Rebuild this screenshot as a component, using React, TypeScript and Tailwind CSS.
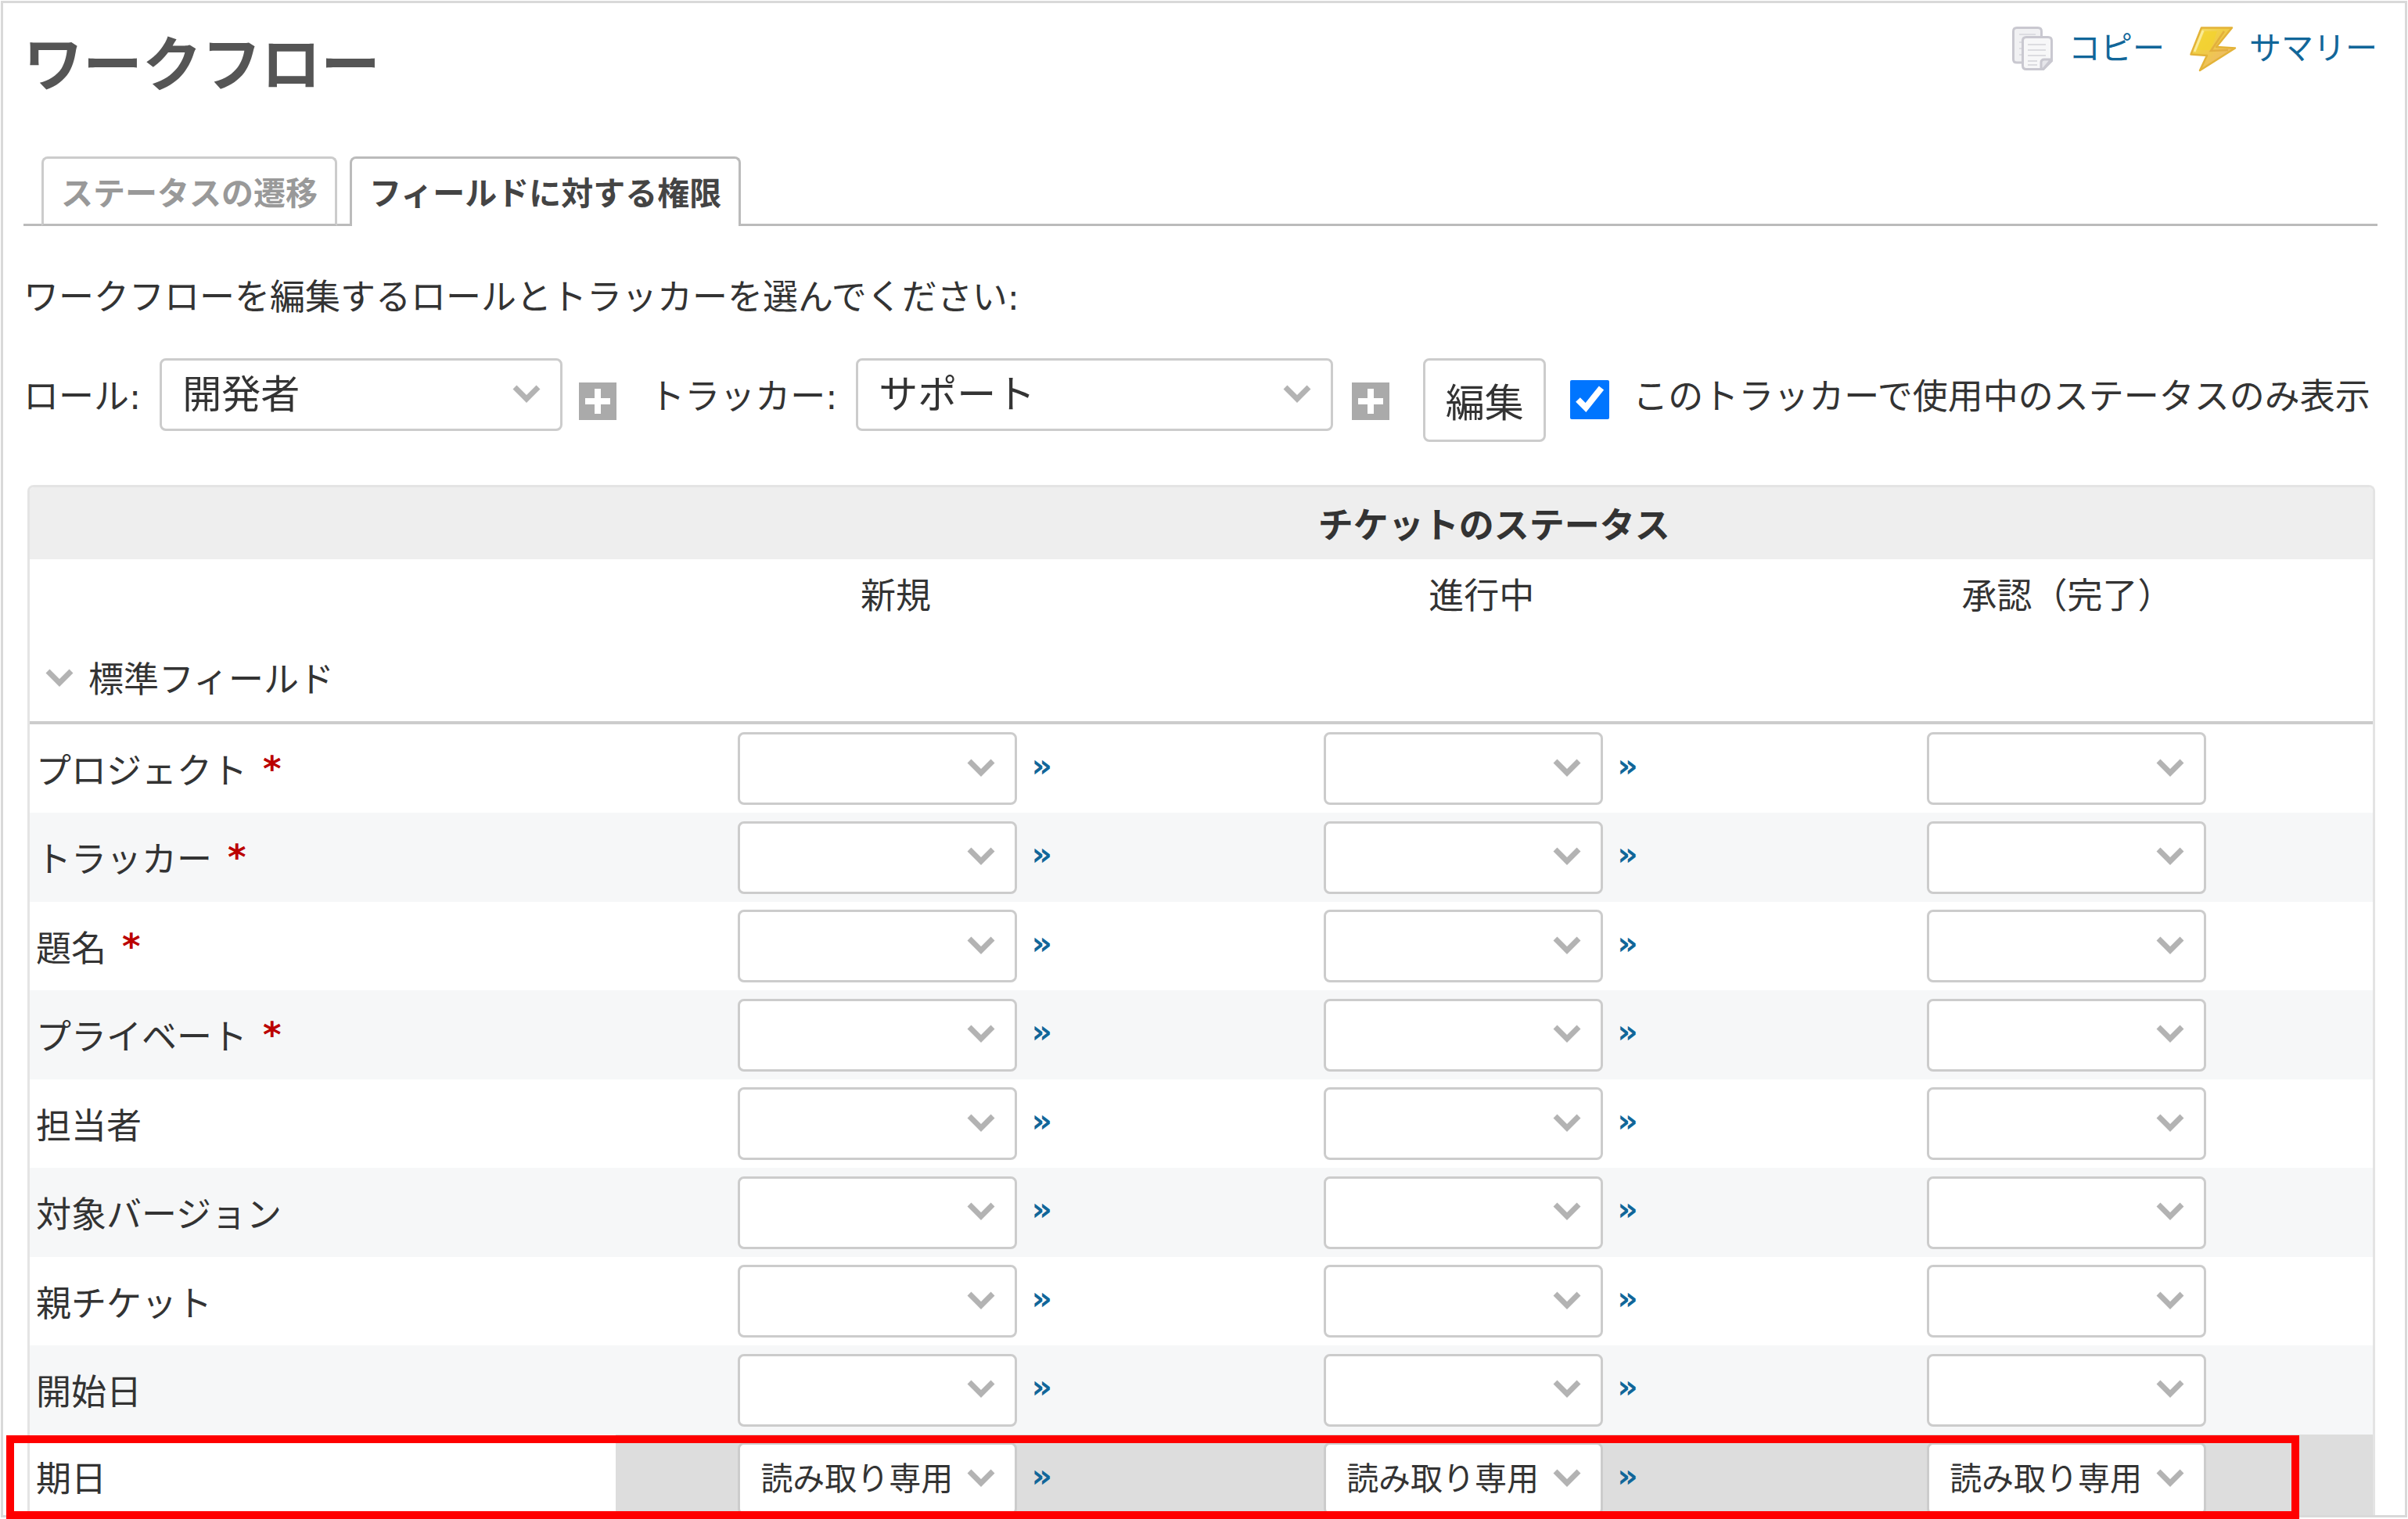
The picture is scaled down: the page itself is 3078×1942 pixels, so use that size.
import { useState } from "react";

const STATUSES = ["新規", "進行中", "承認（完了）"];

type Field = { name: string; required?: boolean; readOnly?: boolean };

const FIELDS: Field[] = [
  { name: "プロジェクト", required: true },
  { name: "トラッカー", required: true },
  { name: "題名", required: true },
  { name: "プライベート", required: true },
  { name: "担当者" },
  { name: "対象バージョン" },
  { name: "親チケット" },
  { name: "開始日" },
  { name: "期日", readOnly: true },
];

function Chevron({ className = "" }: { className?: string }) {
  return (
    <svg viewBox="0 0 36 24" className={`h-6 w-9 ${className}`} fill="none" aria-hidden="true">
      <path d="M3 3 L18 18 L33 3" stroke="#b3b3b3" strokeWidth="7" />
    </svg>
  );
}

type SelectBoxProps = {
  id?: string;
  label?: string;
  value: string;
  options: string[];
  className: string;
};

function SelectBox({ id, label, value, options, className }: SelectBoxProps) {
  return (
    <span className="inline-grid items-center">
      <select
        id={id}
        aria-label={label}
        defaultValue={value}
        className={`col-start-1 row-start-1 h-[93px] appearance-none rounded-lg border-[3px] border-[#ccc] bg-white pr-[70px] pl-[26px] leading-[64px] ${className}`}
      >
        {options.map((option) => (
          <option key={option} value={option}>
            {option}
          </option>
        ))}
      </select>
      <Chevron className="pointer-events-none col-start-1 row-start-1 mr-7 mb-0.5 justify-self-end" />
    </span>
  );
}

function PlusButton({ label, className }: { label: string; className: string }) {
  return (
    <button type="button" aria-label={label} className={className}>
      <svg viewBox="0 0 48 48" className="size-12" aria-hidden="true">
        <rect width="48" height="48" fill="#aaa" />
        <path d="M24 8 V40 M8 24 H40" stroke="#fff" strokeWidth="8" />
      </svg>
    </button>
  );
}

function CopyIcon() {
  return (
    <svg viewBox="0 0 52 56" className="h-14 w-[52px]" fill="none" aria-hidden="true">
      <path
        d="M6 1.500 H33 Q37.500 1.500 37.500 6 V46 H6 Q1.500 46 1.500 42 V6 Q1.500 1.500 6 1.500 Z"
        fill="#f1f1f3"
        stroke="#c9c8d0"
        strokeWidth="3"
      />
      <path d="M9 10 H30 M9 20 H13 M9 28 H13 M9 36 H13" stroke="#dddde2" strokeWidth="2" />
      <path
        d="M18 13.500 H46 Q50.500 13.500 50.500 18 V44 L40 54.500 H18 Q13.500 54.500 13.500 50 V18 Q13.500 13.500 18 13.500 Z"
        fill="#f7f7f8"
        stroke="#c9c8d0"
        strokeWidth="3"
      />
      <path d="M20 23 H43 M20 30 H43 M20 37 H43 M20 44 H32 M20 49 H32" stroke="#dcdce0" strokeWidth="2" />
      <path d="M37 54 V46 Q37 42 41 42 H50 L40 54 Z" fill="#e6e6ea" stroke="#c9c8d0" strokeWidth="3" />
    </svg>
  );
}

function LightningIcon() {
  return (
    <svg viewBox="0 0 60 58" className="h-[58px] w-[60px]" aria-hidden="true">
      <defs>
        <linearGradient id="bolt" x1="0" y1="0" x2="1" y2="1">
          <stop offset="0" stopColor="#f6e06a" />
          <stop offset="0.4" stopColor="#f0cd45" />
          <stop offset="0.7" stopColor="#eebd62" />
          <stop offset="1" stopColor="#dea22a" />
        </linearGradient>
      </defs>
      <path
        d="M15 1.500 H54 L34 26 L58 27.500 L13 56 L22 37 L1.500 35.500 Z"
        fill="url(#bolt)"
        stroke="#e3b338"
        strokeWidth="2.500"
        strokeLinejoin="round"
      />
      <path d="M19 6 H35 L27 30 H9 Z" fill="#f2d22e" opacity="0.8" />
      <path d="M44 6 L27 31 L49 30" fill="none" stroke="#dfa93a" strokeWidth="2.500" opacity="0.8" />
      <path d="M17 5 L6 32" stroke="#faeb96" strokeWidth="3" />
    </svg>
  );
}

export default function App() {
  const [expanded, setExpanded] = useState(true);

  return (
    <div className="relative bg-white px-px pt-px pb-0.5 font-['DejaVu_Sans','Noto_Sans_CJK_JP',sans-serif] text-[45px] leading-[46px] text-[#333]">
      <main className="border-[3px] border-[#d9d9d9] pr-[35px] pl-[26px]">
        <header className="flex items-start justify-between pt-[30px]">
          <h1 className="mt-3 text-[76px] leading-[76px] font-bold text-[#555]">ワークフロー</h1>
          <div className="flex items-start gap-8 text-[41px] leading-[56px] text-[#169]">
            <a href="#copy" className="flex gap-5">
              <CopyIcon />
              コピー
            </a>
            <a href="#summary" className="flex gap-4">
              <LightningIcon />
              サマリー
            </a>
          </div>
        </header>

        <nav className="mt-[78px] flex h-[89px] text-[41px] font-bold">
          <span className="w-[23px] border-b-[3px] border-[#bbb]" />
          <a
            href="#transitions"
            className="flex items-center rounded-t-lg border-[3px] border-[#ccc] border-b-[#bbb] px-[22px] pt-1.5 text-[#999]"
          >
            ステータスの遷移
          </a>
          <span className="w-4 border-b-[3px] border-[#bbb]" />
          <a
            href="#permissions"
            aria-current="page"
            className="flex items-center rounded-t-lg border-x-[3px] border-t-[3px] border-[#bbb] px-[22px] pt-1.5 pb-[3px] text-[#444]"
          >
            フィールドに対する権限
          </a>
          <span className="flex-1 border-b-[3px] border-[#bbb]" />
        </nav>

        <p className="mt-[69px]">ワークフローを編集するロールとトラッカーを選んでください:</p>

        <form className="mt-[54px] flex items-start whitespace-nowrap" onSubmit={(e) => e.preventDefault()}>
          <label htmlFor="role" className="mt-[27px] mr-6">
            ロール:
          </label>
          <SelectBox id="role" value="開発者" options={["開発者", "管理者", "報告者"]} className="w-[515px] text-[50px]" />
          <PlusButton label="ロールを複数選択" className="mt-[31px] ml-[21px]" />
          <label htmlFor="tracker" className="mt-[27px] mr-6 ml-[42px]">
            トラッカー:
          </label>
          <SelectBox id="tracker" value="サポート" options={["サポート", "バグ", "機能"]} className="w-[610px] text-[50px]" />
          <PlusButton label="トラッカーを複数選択" className="mt-[31px] ml-6" />
          <button
            type="submit"
            className="ml-[43px] h-[107px] w-[157px] rounded-lg border-[3px] border-[#ccc] bg-white pt-2 text-[50px]"
          >
            編集
          </button>
          <input id="used" type="checkbox" defaultChecked className="mt-7 ml-[31px] size-[50px] accent-[#0075ff]" />
          <label htmlFor="used" className="mt-[27px] ml-[30px]">
            このトラッカーで使用中のステータスのみ表示
          </label>
        </form>

        <div className="mt-[55px] mr-[3px] ml-[5px] overflow-hidden rounded-t-lg border-x-[3px] border-t-[3px] border-[#e4e4e4]">
          <table className="w-full table-fixed border-separate border-spacing-0">
            <thead>
              <tr className="h-[92px] bg-[#eee]">
                <td className="w-1/4 p-0" />
                <th colSpan={3} className="p-0 pt-2 font-bold">
                  チケットのステータス
                </th>
              </tr>
              <tr className="h-[92px]">
                <td className="p-0" />
                {STATUSES.map((status) => (
                  <th key={status} scope="col" className="p-0 pt-1 pr-8 text-center font-normal">
                    {status}
                  </th>
                ))}
              </tr>
              <tr className="h-[119px]">
                <th colSpan={4} className="border-b-4 border-[#ccc] p-0 pt-1 pl-5 text-left font-normal">
                  <button
                    type="button"
                    aria-expanded={expanded}
                    onClick={() => setExpanded(!expanded)}
                    className="flex items-center gap-[19px]"
                  >
                    <Chevron />
                    <span className="pt-1.5">標準フィールド</span>
                  </button>
                </th>
              </tr>
            </thead>
            {expanded && (
              <tbody>
                {FIELDS.map((field) => (
                  <tr
                    key={field.name}
                    className={field.readOnly ? "h-[103px]" : "odd:h-[113px] even:h-[114px] even:bg-[#f6f7f8]"}
                  >
                    <th scope="row" className={`p-0 pl-2 text-left font-normal ${field.readOnly ? "pt-3" : "pt-2"}`}>
                      <span className="flex">
                        {field.name}
                        {field.required && <span className="-mt-1 ml-5 font-bold text-[#b00]">*</span>}
                      </span>
                    </th>
                    {STATUSES.map((status, column) => (
                      <td key={status} className={`p-0 pr-[34px] ${field.readOnly ? "bg-[#ddd] pt-[10px]" : ""}`}>
                        <div className="flex items-center justify-center">
                          <SelectBox
                            label={`${field.name} ${status}`}
                            value={field.readOnly ? "読み取り専用" : ""}
                            options={["", "読み取り専用", "必須"]}
                            className="w-[357px] pt-1 pb-1 pl-7 text-[41px]"
                          />
                          {column < STATUSES.length - 1 && (
                            <a
                              href="#copy-right"
                              aria-label="右の列にコピー"
                              className="ml-[18px] pb-2 text-[41px] font-bold text-[#169]"
                            >
                              »
                            </a>
                          )}
                        </div>
                      </td>
                    ))}
                  </tr>
                ))}
              </tbody>
            )}
          </table>
        </div>
      </main>

      <div className="pointer-events-none absolute right-[139px] bottom-0 left-2 h-[107px] border-[10px] border-[#f00]" />
    </div>
  );
}
